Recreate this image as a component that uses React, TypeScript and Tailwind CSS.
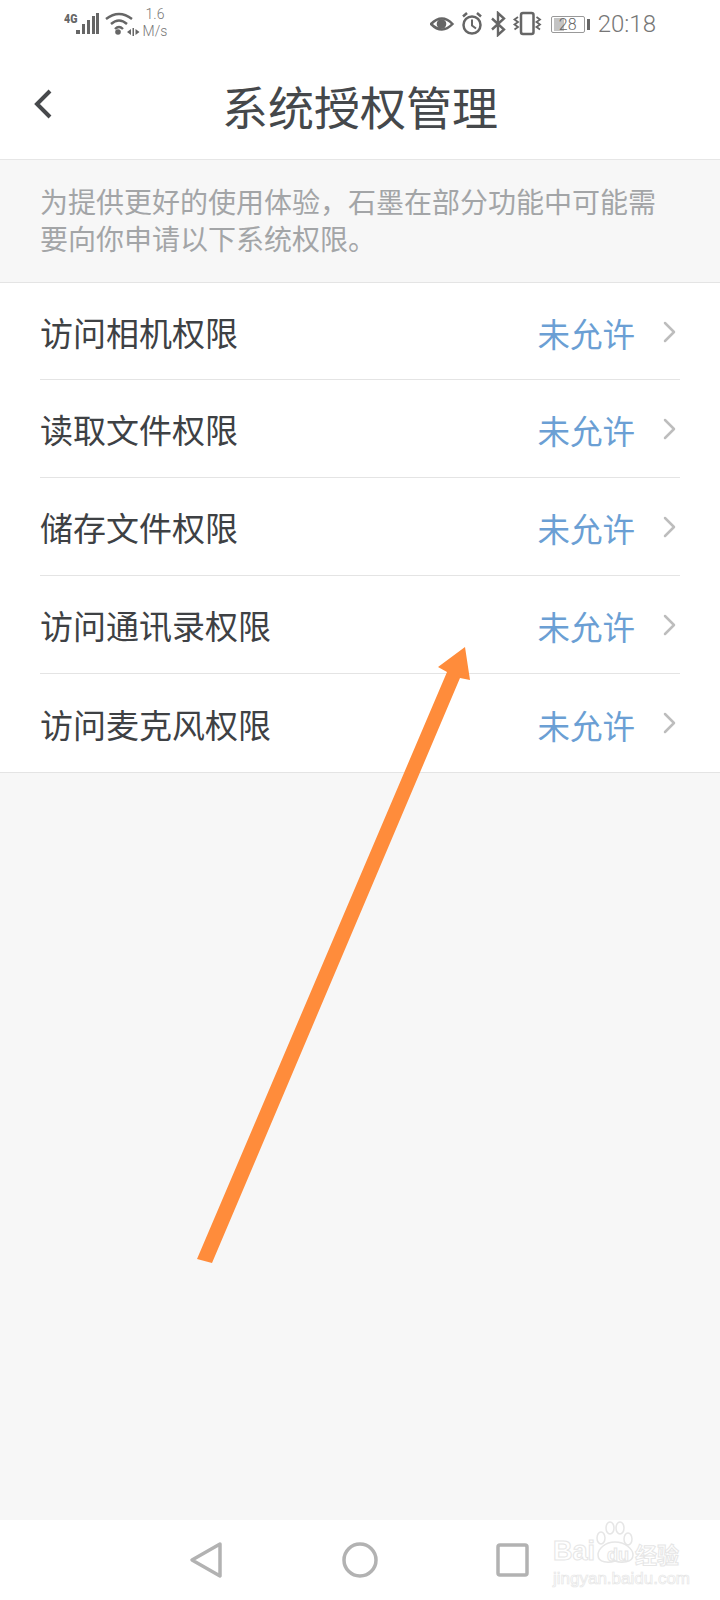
import React from "react";

const rows = ["访问相机权限", "读取文件权限", "储存文件权限", "访问通讯录权限", "访问麦克风权限"];
const cjk = { fontFamily: '"Noto Sans CJK SC", "Noto Sans", sans-serif' };

function StatusLeft() {
  return (
    <div className="flex items-start">
      <svg width="110" height="40" viewBox="0 0 110 40" className="mt-[5px]" fill="#666">
        <text x="0" y="18" fontSize="12.500" fontWeight="900" fontFamily="Roboto, sans-serif" transform="scale(0.85 1)">4G</text>
        <rect x="12" y="25" width="4" height="4" />
        <rect x="18" y="19" width="3" height="10" />
        <rect x="23" y="15" width="3" height="14" />
        <rect x="28" y="11" width="3" height="18" />
        <rect x="32" y="8" width="3" height="21" />
        <g fill="none" stroke="#666" strokeWidth="2.400">
          <path d="M42 14 Q55 4 68 14" />
          <path d="M47 19 Q55 12 63 19" />
          <path d="M51 24 Q55 20 59 24" />
        </g>
        <circle cx="54" cy="27" r="2.800" />
        <path d="M63 27 l4-3 v6z M68.500 23 h1.500 v8 h-1.500z M71.500 24 l4 3 -4 3z" />
      </svg>
      <div className="ml-[-37px] mt-[6px] w-[36px] text-center text-[14px] leading-[17px] text-[#777]" style={{ fontFamily: "Roboto, sans-serif" }}>
        <div className="font-light">1.6</div>
        <div className="font-light">M/s</div>
      </div>
    </div>
  );
}

function StatusRight() {
  return (
    <div className="flex items-center">
      <svg width="113" height="26" viewBox="0 0 113 26" fill="none" stroke="#666" strokeWidth="2.500">
        <path d="M1 13 Q12 2 22.500 13 Q12 24 1 13Z" />
        <circle cx="11.500" cy="13" r="4.800" fill="#666" stroke="none" />
        <circle cx="42" cy="14" r="8.500" />
        <path d="M42 8.500 v6 l4 3" strokeWidth="2" />
        <path d="M33 5.500 l4-3.500 M51 5.500 l-4-3.500" />
        <path d="M62 7.500 l12 11 -6 5.500 v-22 l6 5.500 -12 11" strokeWidth="2.400" />
        <rect x="91" y="2" width="12.500" height="21" rx="2" />
        <path d="M88 6 l-3.500 2.500 3.500 2.500 -3.500 2.500 3.500 2.500 -3.500 2.500 M106.500 6 l3.500 2.500 -3.500 2.500 3.500 2.500 -3.500 2.500 3.500 2.500" strokeWidth="1.800" />
      </svg>
      <div className="ml-[8px] flex items-center">
        <div className="relative flex h-[17px] w-[34px] items-center justify-center rounded-[2px] border border-[#999] text-[16px] font-light leading-[15px] text-[#666]" style={{ fontFamily: "Roboto, sans-serif" }}>
          <div className="absolute left-[2px] top-[1px] h-[13px] w-[10px] bg-[#c4c4c4]" />
          <span className="relative">28</span>
        </div>
        <div className="ml-[2px] h-[11px] w-[3px] bg-[#666]" />
      </div>
      <div className="ml-[8px] text-[24px] font-light leading-none text-[#777]" style={{ fontFamily: "Roboto, sans-serif" }}>20:18</div>
    </div>
  );
}

function Row({ label, last, first }: { label: string; last: boolean; first: boolean }) {
  return (
    <div className={`mx-[40px] flex items-center justify-between ${first ? "h-[97px] pt-[5px]" : "h-[98px] pt-[4px]"} ${last ? "" : "border-b border-[#e4e4e4]"}`}>
      <span className="mt-[-2px] text-[33px] leading-none text-[#3e4144]">{label}</span>
      <div className="flex items-center">
        <span className="text-[32.500px] leading-none text-[#6b9fd4]">未允许</span>
        <svg width="16" height="24" viewBox="0 0 16 24" fill="none" stroke="#bdbdbd" strokeWidth="2.500" strokeLinecap="round" strokeLinejoin="round" className="ml-[27px] mr-[2px] mt-[-4px]">
          <path d="M3 3 L12 12 L3 21" />
        </svg>
      </div>
    </div>
  );
}

export default function App() {
  return (
    <div className="relative flex h-[1600px] w-[720px] flex-col overflow-hidden bg-[#f7f7f7]" style={cjk}>
      <header className="h-[160px] shrink-0 border-b border-[#e6e6e6] bg-white">
        <div className="flex h-[50px] items-start justify-between pl-[64px] pr-[64px]">
          <StatusLeft />
          <div className="mt-[11px]"><StatusRight /></div>
        </div>
        <div className="relative flex h-[109px] items-center justify-center">
          <svg width="20" height="30" viewBox="0 0 20 30" fill="none" stroke="#47494c" strokeWidth="4" className="absolute left-[33px] top-[39px]">
            <path d="M17 2 L4 15 L17 28" />
          </svg>
          <h1 className="text-[46px] font-normal leading-none text-[#45484b]">系统授权管理</h1>
        </div>
      </header>

      <div className="h-[123px] shrink-0 border-b border-[#e4e4e4] px-[40px] pt-[23px] text-[28px] leading-[37px] text-[#a3a5a7]">
        <p className="whitespace-nowrap">为提供更好的使用体验，石墨在部分功能中可能需</p>
        <p className="whitespace-nowrap">要向你申请以下系统权限。</p>
      </div>

      <div className="shrink-0 border-b border-[#e4e4e4] bg-white">
        {rows.map((r, i) => (
          <Row key={r} label={r} first={i === 0} last={i === rows.length - 1} />
        ))}
      </div>

      <div className="flex-1" />

      <nav className="relative h-[80px] shrink-0 bg-white">
        <svg width="720" height="80" viewBox="0 1520 720 80" fill="none" stroke="#b2b2b2" strokeWidth="3.500" strokeLinejoin="round">
          <path d="M220 1544 L192 1560 L220 1576Z" />
          <circle cx="360" cy="1560" r="16" />
          <rect x="498" y="1545" width="29" height="30" rx="2" />
        </svg>
        <div className="absolute left-[553px] top-[18px] text-[27px] font-bold leading-none text-transparent [-webkit-text-stroke:1px_#e6e6e6]" style={{ fontFamily: '"Liberation Sans", sans-serif' }}>Bai</div>
        <div className="absolute left-[607px] top-[26px] text-[18px] font-bold leading-none text-transparent [-webkit-text-stroke:1px_#e6e6e6]" style={{ fontFamily: '"Liberation Sans", sans-serif' }}>du</div>
        <div className="absolute left-[635px] top-[22px] text-[22px] font-bold leading-none text-transparent [-webkit-text-stroke:1px_#e6e6e6]">经验</div>
        <div className="absolute left-[553px] top-[50px] text-[17px] leading-none text-transparent [-webkit-text-stroke:0.7px_#e6e6e6]" style={{ fontFamily: '"Liberation Sans", sans-serif' }}>
          jingyan.baidu.com
        </div>
      </nav>

      <svg className="absolute left-0 top-0" width="720" height="1600" viewBox="0 0 720 1600">
        <path d="M465 647 L438 667 L447 672 L197 1259 L212 1263 L460 678 L470 680 Z" fill="#ff8c3b" />
        <g fill="none" stroke="#e6e6e6" strokeWidth="1.500">
          <ellipse cx="601" cy="1538" rx="4" ry="6" />
          <ellipse cx="610" cy="1528" rx="4" ry="6" />
          <ellipse cx="620" cy="1528" rx="4" ry="6" />
          <ellipse cx="628" cy="1539" rx="4" ry="6" />
          <path d="M615 1542 C605 1542 598 1549 598 1555 C598 1563 609 1563 615 1561 C621 1563 633 1563 633 1555 C633 1549 625 1542 615 1542Z" />
        </g>
      </svg>
    </div>
  );
}
